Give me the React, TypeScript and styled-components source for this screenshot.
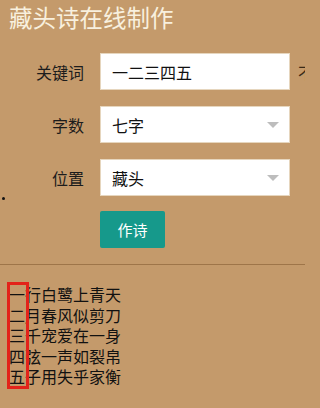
import React from 'react';
import styled, { createGlobalStyle } from 'styled-components';

const GlobalStyle = createGlobalStyle`
  html, body {
    margin: 0;
    padding: 0;
    background-color: #c49a6b;
    overflow: hidden;
  }
  body {
    width: 305px;
    height: 408px;
    font-family: "Noto Sans CJK SC", "Noto Sans", sans-serif;
    color: #1c1c1c;
  }
`;

const lines = [
  '一行白鹭上青天',
  '二月春风似剪刀',
  '三千宠爱在一身',
  '四弦一声如裂帛',
  '五子用失乎家衡',
];

const App = () => {
  return (
    <Page>
      <GlobalStyle />
      <Title>藏头诗在线制作</Title>
      <Form>
        <Row>
          <Label>关键词</Label>
          <Field>一二三四五</Field>
          <Hint>不</Hint>
        </Row>
        <Row>
          <Label>字数</Label>
          <SelectBox>
            七字
            <Caret />
          </SelectBox>
        </Row>
        <Row>
          <Label>位置</Label>
          <SelectBox>
            藏头
            <Caret />
          </SelectBox>
        </Row>
        <Dot />
        <Row>
          <span />
          <Button>作诗</Button>
        </Row>
      </Form>
      <Divider />
      <Poem>
        {lines.map((line) => (
          <PoemLine key={line}>{line}</PoemLine>
        ))}
        <HeadMark />
      </Poem>
    </Page>
  );
};

export default App;

const Page = styled.div`
  width: 305px;
  height: 408px;
  overflow: hidden;
`;

const Title = styled.h1`
  margin: 0;
  padding: 2px 0 0 9px;
  font-size: 23.5px;
  line-height: 30px;
  font-weight: normal;
  color: #f8f0de;
  white-space: nowrap;
`;

const Form = styled.div`
  display: flex;
  flex-direction: column;
  margin-top: 21px;
`;

const Row = styled.div`
  display: grid;
  grid-template-columns: 84px 190px auto;
  column-gap: 16px;
  align-items: center;
  margin-bottom: 16px;
  white-space: nowrap;
`;

const Label = styled.div`
  text-align: right;
  font-size: 16px;
  color: #1c1c1c;
`;

const Field = styled.div`
  box-sizing: border-box;
  height: 37px;
  padding-left: 11px;
  display: flex;
  align-items: center;
  background-color: #ffffff;
  border: 1px solid #e6d6be;
  font-size: 16px;
  color: #111;
`;

const SelectBox = styled(Field)`
  justify-content: space-between;
  padding-right: 10px;
`;

const Caret = styled.span`
  width: 0;
  height: 0;
  border-left: 6px solid transparent;
  border-right: 6px solid transparent;
  border-top: 6px solid #bdbdbd;
`;

const Hint = styled.span`
  margin-left: -8px;
  font-size: 16px;
  color: #3a2a18;
`;

const Dot = styled.div`
  width: 3px;
  height: 3px;
  margin: -15px 0 11px 2px;
  border-radius: 50%;
  background-color: #111;
`;

const Button = styled.div`
  box-sizing: border-box;
  width: 65px;
  height: 37px;
  display: flex;
  align-items: center;
  justify-content: center;
  background-color: #16998b;
  border-radius: 2px;
  color: #ffffff;
  font-size: 15px;
`;

const Divider = styled.div`
  height: 1px;
  background-color: #9e7549;
`;

const Poem = styled.div`
  position: relative;
  margin-top: 19px;
  padding-left: 9px;
`;

const PoemLine = styled.div`
  font-size: 16px;
  line-height: 20.6px;
  color: #111;
  white-space: nowrap;
`;

const HeadMark = styled.div`
  position: absolute;
  left: 7px;
  top: -2px;
  box-sizing: border-box;
  width: 22px;
  height: 107px;
  border: 3px solid #e3231a;
`;
